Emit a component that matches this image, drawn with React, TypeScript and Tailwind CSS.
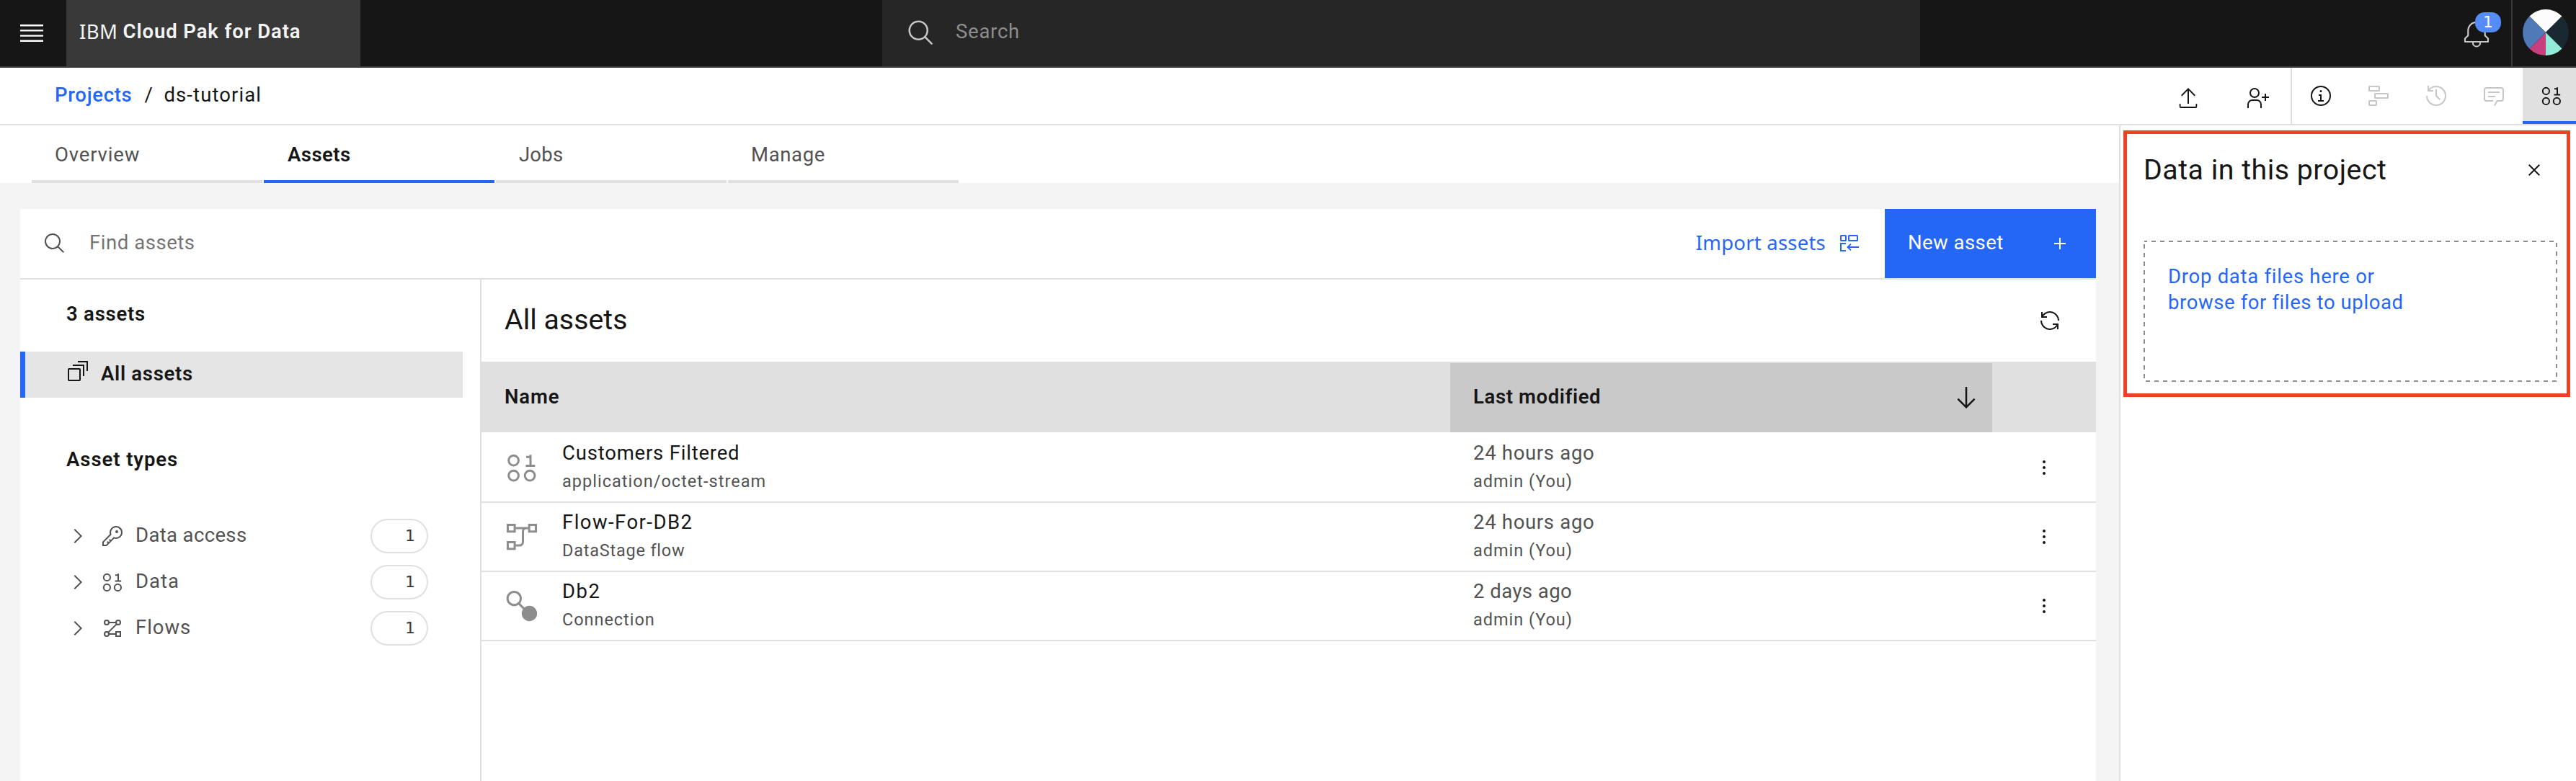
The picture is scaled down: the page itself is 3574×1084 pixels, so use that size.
import React from "react";

type IconProps = { className?: string; children: React.ReactNode };

function Solid({ className = "size-8", children }: IconProps) {
  return (
    <svg viewBox="0 0 32 32" fill="currentColor" className={`shrink-0 ${className}`}>
      {children}
    </svg>
  );
}

function Outline({ className = "size-8", children }: IconProps) {
  return (
    <svg viewBox="0 0 32 32" fill="none" stroke="currentColor" strokeWidth="2" className={`shrink-0 ${className}`}>
      {children}
    </svg>
  );
}

const SearchIcon = ({ className }: { className?: string }) => (
  <Solid className={className}>
    <path d="M29,27.5859l-7.5521-7.5521a11.0177,11.0177,0,1,0-1.4141,1.4141L27.5859,29ZM4,13a9,9,0,1,1,9,9A9.01,9.01,0,0,1,4,13Z" />
  </Solid>
);

const DataIcon = ({ className }: { className?: string }) => (
  <Outline className={className}>
    <circle cx="8.4" cy="9.4" r="4.6" />
    <circle cx="8.4" cy="23.4" r="4.6" />
    <circle cx="23.4" cy="23.4" r="4.6" />
    <path d="M20 6.2H24.7M24 4.2V14.4M19.6 14.4H28.2" />
  </Outline>
);

const ChevronIcon = () => (
  <Solid>
    <path d="M22 16 12 26 10.6 24.6 19.2 16 10.6 7.4 12 6z" />
  </Solid>
);

const KeyIcon = () => (
  <Solid>
    <path d="M21,2a8.9977,8.9977,0,0,0-8.6119,11.6118L2,24v6H8L18.3881,19.6118A9,9,0,1,0,21,2Zm0,16a7.0125,7.0125,0,0,1-2.0322-.3022L17.821,17.35l-.8472.8472-3.1811,3.1812L12.4141,20,11,21.4141l1.3787,1.3786-1.5859,1.586L9.4141,23,8,24.4141l1.3787,1.3786L7.1716,28H4V24.8284l9.8023-9.8023.8472-.8474-.3473-1.1467A7,7,0,1,1,21,18Z" />
    <circle cx="22" cy="10" r="2" />
  </Solid>
);

const FlowsIcon = () => (
  <Outline>
    <circle cx="8" cy="8" r="3" />
    <circle cx="24" cy="8" r="3" />
    <circle cx="8" cy="24" r="3" />
    <rect x="21" y="21" width="6" height="6" />
    <path d="M11 8H21M11 24H20M10.1 21.9 21.9 10.1" />
  </Outline>
);

const StageFlowIcon = () => (
  <Outline className="size-12">
    <rect x="3" y="5" width="6.4" height="6.2" />
    <rect x="22.8" y="5" width="6.2" height="6.2" />
    <rect x="3" y="21" width="6.4" height="6.2" />
    <path d="M10 8H22M22 8H20.2A3.2 3.2 0 0 0 17 11.2V20.8A3.2 3.2 0 0 1 13.8 24H10" />
  </Outline>
);

const ConnectionIcon = () => (
  <Outline className="size-12">
    <circle cx="8.9" cy="9.1" r="6.1" />
    <path d="M13 13.6 19 19.6" />
    <circle cx="23" cy="23" r="6.1" fill="currentColor" />
  </Outline>
);

const tabs = [
  { label: "Overview", text: "tracking-[0.85px] text-[#525252] border-[#e0e0e0] pl-8" },
  { label: "Assets", text: "tracking-[0.45px] text-[#161616] font-semibold border-[#2466f6] pl-[33px]" },
  { label: "Jobs", text: "tracking-[0.2px] text-[#525252] border-[#e0e0e0] pl-8" },
  { label: "Manage", text: "tracking-[0.65px] text-[#525252] border-[#e0e0e0] pl-8" },
];

const assetTypes = [
  { label: "Data access", icon: <KeyIcon />, track: "tracking-[0.36px]" },
  { label: "Data", icon: <DataIcon />, track: "tracking-[1px]" },
  { label: "Flows", icon: <FlowsIcon />, track: "tracking-[0.95px]" },
];

const rows = [
  {
    name: "Customers Filtered",
    nameTrack: "tracking-[0.8px]",
    type: "application/octet-stream",
    typeTrack: "tracking-[1.02px]",
    icon: <DataIcon className="size-12" />,
    when: "24 hours ago",
    whenTrack: "tracking-[0.69px]",
  },
  {
    name: "Flow-For-DB2",
    nameTrack: "tracking-[1.45px]",
    type: "DataStage flow",
    typeTrack: "tracking-[0.78px]",
    icon: <StageFlowIcon />,
    when: "24 hours ago",
    whenTrack: "tracking-[0.69px]",
  },
  {
    name: "Db2",
    nameTrack: "tracking-[1.5px]",
    type: "Connection",
    typeTrack: "tracking-[0.95px]",
    icon: <ConnectionIcon />,
    when: "2 days ago",
    whenTrack: "tracking-[0.46px]",
  },
];

function Header() {
  return (
    <header className="flex h-[94px] border-b-2 border-[#393939] bg-[#161616]">
      <button className="flex w-[92px] items-center pl-6">
        <svg viewBox="0 0 20 20" fill="#ffffff" className="size-10">
          <path d="M2 14.8h16V16H2zM2 11.2h16v1.2H2zM2 7.6h16v1.2H2zM2 4h16v1.2H2z" />
        </svg>
      </button>
      <div className="flex w-[408px] items-center gap-[7px] bg-[#393939] pb-[5px] pl-[18px] text-[#f4f4f4]">
        <span className="font-['Noto_Sans',sans-serif] tracking-[0.46px]">IBM</span>
        <span className="font-semibold tracking-[0.9px]">Cloud Pak for Data</span>
      </div>
      <div className="ml-[724px] flex w-[1440px] items-center bg-[#262626] pl-[34px]">
        <SearchIcon className="size-10 text-[#c6c6c6]" />
        <span className="pb-[5px] pl-[28px] tracking-[0.74px] text-[#8d8d8d]">Search</span>
      </div>
      <div className="ml-auto flex w-[158px] items-center">
        <div className="relative">
          <svg viewBox="0 0 40 40" fill="none" stroke="#c6c6c6" strokeWidth="2.2" className="size-10">
            <path d="M4 32V27.6L8.3 23.2V16.5A11.7 11.7 0 0 1 31.7 16.5V23.2L36 27.6V32Z" strokeLinejoin="round" />
            <path d="M14.9 32v1.4a5.1 5.1 0 0 0 10.2 0V32" />
          </svg>
          <span className="absolute -top-[9px] left-[18px] flex h-7 w-9 items-center justify-center rounded-[13px] bg-[#558cf7] font-['DejaVu_Sans',sans-serif] text-[22px] leading-7 text-white">
            1
          </span>
        </div>
        <div className="ml-[28px] flex h-full items-center border-l-2 border-[#393939] pb-[2px] pl-[14px]">
          <svg viewBox="-32 -32 64 64" className="size-16">
            <path d="M0 0-22.6-22.6A32 32 0 0 1 22.6-22.6Z" fill="#fcfcfc" />
            <path d="M0 0 22.6-22.6A32 32 0 0 1 22.6 22.6Z" fill="#1a2832" />
            <path d="M0 0 22.6 22.6A32 32 0 0 1 0 32Z" fill="#92ead9" />
            <path d="M0 0V32A32 32 0 0 1-22.6 22.6Z" fill="#c73f7e" />
            <path d="M0 0-22.6 22.6A32 32 0 0 1-22.6-22.6Z" fill="#4f79b7" />
          </svg>
        </div>
      </div>
    </header>
  );
}

function BreadcrumbBar() {
  return (
    <div className="flex h-20 border-b-2 border-[#e0e0e0] bg-white">
      <nav className="flex items-center pb-[3px] pl-[76px]">
        <a className="font-medium tracking-[0.7px] text-[#2466f6]">Projects</a>
        <span className="w-[44px] pl-[17px]">/</span>
        <span className="tracking-[1.1px]">ds-tutorial</span>
      </nav>
      <div className="ml-auto flex items-center gap-16 pr-[30px] pt-[6px]">
        <Solid>
          <path d="M6 12 7.411 13.405 15 5.825 15 24 17 24 17 5.825 24.591 13.405 26 12 16 2 6 12z" />
          <path d="M28 24v4H4V24H2v4a2 2 0 0 0 2 2H28a2 2 0 0 0 2-2V24Z" transform="translate(2 0) scale(.875 1)" />
        </Solid>
        <Solid>
          <path d="M32 14H28V10H26v4H22v2h4v4h2V16h4zM12 4A5 5 0 1 1 7 9a5 5 0 0 1 5-5m0-2a7 7 0 1 0 7 7A7 7 0 0 0 12 2ZM22 30H20V25a5 5 0 0 0-5-5H9a5 5 0 0 0-5 5v5H2V25a7 7 0 0 1 7-7h6a7 7 0 0 1 7 7Z" />
        </Solid>
      </div>
      <div className="flex w-[396px] border-l-2 border-[#e0e0e0] text-[#c6c6c6]">
        <div className="flex w-[80px] justify-center pt-[23px] text-[#161616]">
          <Solid>
            <path d="M17 22V14H13v2h2v6H12v2h8V22zM16 8a1.5 1.5 0 1 0 1.5 1.5A1.5 1.5 0 0 0 16 8ZM16 30A14 14 0 1 1 30 16 14 14 0 0 1 16 30ZM16 4A12 12 0 1 0 28 16 12 12 0 0 0 16 4Z" />
          </Solid>
        </div>
        <div className="flex w-[80px] justify-center pt-[23px]">
          <Outline>
            <rect x="3" y="3" width="14" height="6" rx=".6" />
            <rect x="11" y="13" width="18" height="6" rx=".6" />
            <rect x="3" y="23" width="10" height="6" rx=".6" />
          </Outline>
        </div>
        <div className="flex w-[80px] justify-center pt-[23px]">
          <Solid>
            <path d="M20.59 22 15 16.41V7h2v8.58l5 5.01zM16 2A13.94 13.94 0 0 0 6 6.23V2H4v8h8V8H7.08A12 12 0 1 1 4 16H2A14 14 0 1 0 16 2Z" />
          </Solid>
        </div>
        <div className="flex w-[80px] justify-center pt-[23px]">
          <Solid>
            <path d="M17.74 30 16 29l4-7h6a2 2 0 0 0 2-2V8a2 2 0 0 0-2-2H6A2 2 0 0 0 4 8V20a2 2 0 0 0 2 2h9v2H6a4 4 0 0 1-4-4V8A4 4 0 0 1 6 4H26a4 4 0 0 1 4 4V20a4 4 0 0 1-4 4H21.16ZM8 10H24V12H8zM8 16H18V18H8z" />
          </Solid>
        </div>
        <div className="flex w-[74px] border-b-4 border-[#2466f6] bg-[#e0e0e0] pl-6 pt-[23px] text-[#161616]">
          <DataIcon />
        </div>
      </div>
    </div>
  );
}

function Sidebar() {
  return (
    <aside className="flex w-[640px] flex-col border-r-2 border-[#e0e0e0] pt-[30px]">
      <h2 className="pl-16 font-semibold tracking-[0.77px]">3 assets</h2>
      <div className="mr-6 mt-[34px] flex h-16 w-[614px] items-center border-l-[7px] border-[#2466f6] bg-[#e5e5e5] pl-[57px]">
        <Outline className="mb-[10px] size-8">
          <rect x="3" y="13" width="16" height="16" rx=".8" />
          <path d="M9 8H24V23M16 3H29V16" />
        </Outline>
        <span className="pb-[3px] pl-4 font-semibold tracking-[0.72px]">All assets</span>
      </div>
      <h2 className="mt-[68px] pl-16 font-semibold tracking-[0.94px]">Asset types</h2>
      <ul className="mt-[56px] text-[#525252]">
        {assetTypes.map((t) => (
          <li key={t.label} className="flex h-16 items-center pl-16">
            <ChevronIcon />
            <span className="w-4" />
            {t.icon}
            <span className={`pb-[3px] pl-4 ${t.track}`}>{t.label}</span>
            <span className="ml-auto mr-[72px] flex h-12 w-20 items-center justify-end rounded-full border-2 border-[#e0e0e0] pb-px pr-4 font-['DejaVu_Sans',sans-serif] text-[22px] text-[#393939]">
              1
            </span>
          </li>
        ))}
      </ul>
    </aside>
  );
}

function AssetTable() {
  return (
    <section className="flex flex-1 flex-col">
      <div className="flex h-[114px] items-center justify-between pl-8 pr-12">
        <h1 className="pb-[3px] text-[39.3px] leading-[48px]">All assets</h1>
        <Solid>
          <path d="M12 10H6.78A11 11 0 0 1 27 16h2A13 13 0 0 0 6 7.68V4H4v8h8zM20 22h5.22A11 11 0 0 1 5 16H3a13 13 0 0 0 23 8.32V28h2V20H20z" />
        </Solid>
      </div>
      <div className="mb-[2px] flex h-[98px] bg-[#e0e0e0] font-semibold">
        <div className="flex w-[1344px] items-center pl-8 tracking-[0.9px]">Name</div>
        <div className="mt-[2px] flex w-[752px] items-center justify-between bg-[#c9c9c9] pl-8 pr-4">
          <span className="pb-[2px] tracking-[0.62px]">Last modified</span>
          <Solid className="size-10">
            <path d="M24.59 16.59 17 24.17V4H15V24.17L7.41 16.59 6 18 16 28 26 18z" />
          </Solid>
        </div>
      </div>
      {rows.map((r) => (
        <div key={r.name} className="flex h-24 border-b-2 border-[#e0e0e0]">
          <div className="flex w-[1344px] pl-8">
            <div className="pt-[23px] text-[#8d8d8d]">{r.icon}</div>
            <div className="flex flex-col gap-[5px] pl-8 pt-[9px]">
              <span className={r.nameTrack}>{r.name}</span>
              <span className={`text-[23.5px] leading-8 text-[#525252] ${r.typeTrack}`}>{r.type}</span>
            </div>
          </div>
          <div className="flex w-[752px] flex-col gap-[5px] pl-8 pt-[9px] text-[#525252]">
            <span className={r.whenTrack}>{r.when}</span>
            <span className="text-[23.5px] leading-8 tracking-[0.96px]">admin (You)</span>
          </div>
          <div className="flex w-[144px] items-center justify-center">
            <Solid>
              <circle cx="16" cy="8" r="2" />
              <circle cx="16" cy="16" r="2" />
              <circle cx="16" cy="24" r="2" />
            </Solid>
          </div>
        </div>
      ))}
    </section>
  );
}

function DataPanel() {
  return (
    <aside className="relative w-[634px] border-l-2 border-[#e0e0e0] bg-white pl-8 pr-[26px] pt-[38px]">
      <div className="flex items-center justify-between pr-[16px]">
        <h2 className="text-[39.3px] leading-[48px] tracking-[0.5px]">Data in this project</h2>
        <Solid>
          <path d="M24 9.4 22.6 8 16 14.6 9.4 8 8 9.4 14.6 16 8 22.6 9.4 24 16 17.4 22.6 24 24 22.6 17.4 16z" />
        </Solid>
      </div>
      <div className="relative mt-[74px] h-[196px] w-[574px] pl-[34px] pt-8 text-[#2466f6]">
        <svg viewBox="0 0 574 196" fill="none" className="absolute inset-0 size-full">
          <rect x="1" y="1" width="572" height="194" stroke="#8d8d8d" strokeWidth="2" strokeDasharray="6 6" strokeDashoffset="2" />
        </svg>
        <p className="tracking-[0.72px]">Drop data files here or</p>
        <p className="tracking-[0.6px]">browse for files to upload</p>
      </div>
      <div className="pointer-events-none absolute left-[4px] top-[7px] h-[370px] w-[620px] border-[5px] border-[#ee4026]" />
    </aside>
  );
}

export default function App() {
  return (
    <div className="flex h-[1084px] w-[3574px] flex-col overflow-hidden whitespace-nowrap bg-[#f4f4f4] font-['Roboto',sans-serif] text-[27.5px] leading-9 text-[#161616]">
      <Header />
      <BreadcrumbBar />
      <div className="flex flex-1">
        <main className="flex flex-1 flex-col">
          <div className="flex h-20 gap-[2px] bg-white pl-11">
            {tabs.map((t) => (
              <div key={t.label} className={`flex w-80 items-center border-b-4 pt-[5px] ${t.text}`}>
                {t.label}
              </div>
            ))}
          </div>
          <div className="ml-7 mr-8 mt-9 flex flex-1 flex-col bg-white">
            <div className="flex h-[98px] items-center border-b-2 border-[#e0e0e0] pl-8">
              <SearchIcon className="size-8 text-[#525252]" />
              <span className="pb-[3px] pl-8 tracking-[0.55px] text-[#757575]">Find assets</span>
              <div className="ml-auto flex items-center text-[#2466f6]">
                <span className="pb-[3px] font-['Noto_Sans',sans-serif] tracking-[0.22px]">Import assets</span>
                <Outline className="ml-[17px] size-8">
                  <rect x="4" y="5" width="7" height="7" rx=".6" />
                  <rect x="15" y="5" width="12" height="7" rx=".6" />
                  <path d="M11 16H4V26H11M29 21H13.6M18 16.6 13.6 21 18 25.4" />
                </Outline>
              </div>
              <button className="ml-[33px] flex h-24 w-[293px] items-center justify-between bg-[#2466f6] pl-8 pr-[34px] text-white">
                <span className="pb-[3px] tracking-[0.45px]">New asset</span>
                <Solid>
                  <path d="M17 15V8H15v7H8v2h7v7h2V17h7V15z" />
                </Solid>
              </button>
            </div>
            <div className="flex flex-1">
              <Sidebar />
              <AssetTable />
            </div>
          </div>
        </main>
        <DataPanel />
      </div>
    </div>
  );
}
